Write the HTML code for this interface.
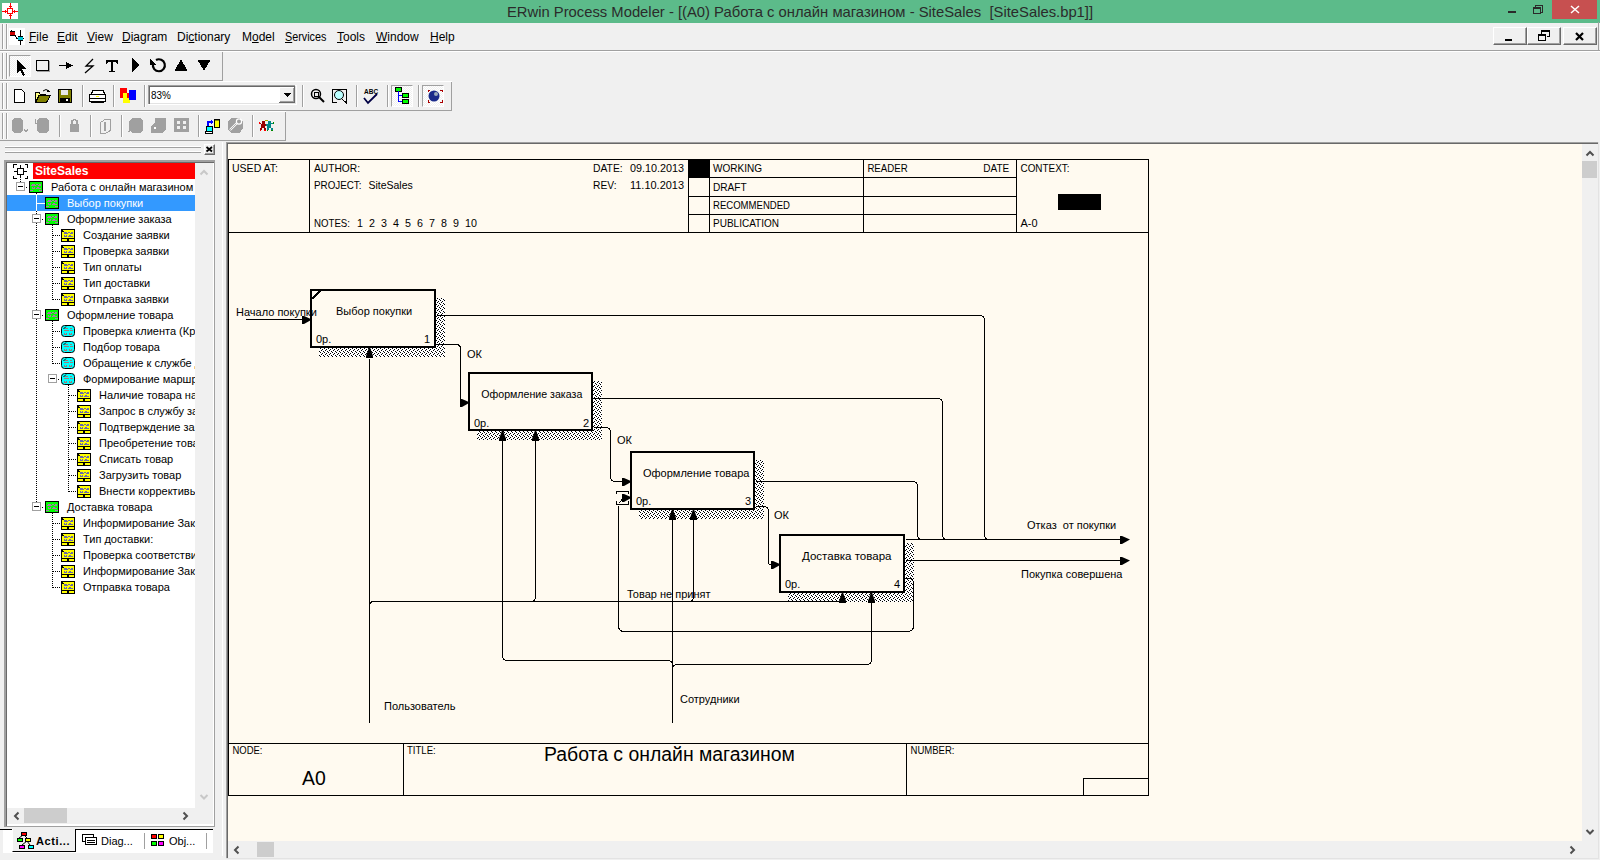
<!DOCTYPE html>
<html><head><meta charset="utf-8"><style>
*{box-sizing:border-box}
html,body{margin:0;padding:0}
body{width:1600px;height:860px;overflow:hidden;position:relative;background:#f0f0f0;font-family:"Liberation Sans",sans-serif;color:#000}
.a{position:absolute}
.mi{position:absolute;top:29px;font-size:12px;line-height:16px;white-space:nowrap}
.mi u{text-decoration:underline;text-underline-offset:1px;text-decoration-thickness:1px}
.tr{position:absolute;left:0;height:16px;width:189px;font-size:11px;line-height:16px;white-space:nowrap}
</style></head><body>
<div class="a" style="left:0px;top:0px;width:1600px;height:23px;background:#5cbb8a;"></div>
<div class="a" style="left:0;top:1px;width:1600px;text-align:center;font-size:14.8px;line-height:22px;color:#2b2b2b;white-space:nowrap">ERwin Process Modeler - [(A0) Работа с онлайн магазином - SiteSales&nbsp;&nbsp;[SiteSales.bp1]]</div>
<svg class="a" style="left:2px;top:3px" width="16" height="16" shape-rendering="crispEdges">
<rect x="0" y="0" width="16" height="16" fill="#fff"/>
<g fill="#f00"><rect x="5" y="5" width="6" height="1"/><rect x="5" y="10" width="6" height="1"/><rect x="5" y="5" width="1" height="6"/><rect x="10" y="5" width="1" height="6"/>
<rect x="8" y="0" width="1" height="5"/><rect x="8" y="11" width="1" height="5"/><rect x="0" y="8" width="5" height="1"/><rect x="11" y="8" width="5" height="1"/>
<rect x="7" y="3" width="3" height="1"/><rect x="7" y="12" width="3" height="1"/><rect x="3" y="7" width="1" height="3"/><rect x="12" y="7" width="1" height="3"/></g>
</svg>
<svg class="a" style="left:1490px;top:0" width="110" height="22" shape-rendering="crispEdges"><rect x="62" y="0" width="45" height="19" fill="#c75050"/><rect x="18" y="11" width="8" height="2" fill="#2a2a2a"/><path d="M43.5,7.5h7v6h-7z M43.5,8.5h7 M45.5,7.5v-2.5h7v7h-2" fill="none" stroke="#2a2a2a"/><path d="M81,6L89,13M89,6L81,13" stroke="#fff" stroke-width="1.5" shape-rendering="auto"/></svg>
<div class="a" style="left:0px;top:50px;width:1600px;height:1px;background:#a0a0a0"></div>
<div class="a" style="left:0px;top:51px;width:1600px;height:1px;background:#ffffff"></div>
<div class="a" style="left:2px;top:24px;width:1px;height:25px;background:#a0a0a0"></div>
<div class="a" style="left:3px;top:24px;width:1px;height:25px;background:#fff"></div>
<div class="a" style="left:6px;top:24px;width:1px;height:25px;background:#a0a0a0"></div>
<div class="a" style="left:7px;top:24px;width:1px;height:25px;background:#fff"></div>
<svg class="a" style="left:9px;top:28px" width="16" height="17" shape-rendering="crispEdges">
<rect x="0" y="0" width="16" height="17" fill="#fff"/>
<rect x="2" y="2" width="1" height="1" fill="#000"/>
<rect x="1" y="4" width="5" height="3" fill="#c00"/><rect x="1" y="3" width="5" height="1" fill="#000"/><rect x="1" y="7" width="5" height="1" fill="#000"/>
<rect x="6" y="7" width="1" height="2" fill="#000"/><rect x="7" y="9" width="1" height="2" fill="#000"/>
<rect x="11" y="2" width="1" height="15" fill="#000"/>
<rect x="9" y="9" width="5" height="3" fill="#00c8d8"/><rect x="8" y="10" width="1" height="1" fill="#000"/><rect x="14" y="10" width="1" height="1" fill="#000"/>
<rect x="9" y="8" width="5" height="1" fill="#000"/><rect x="9" y="12" width="5" height="1" fill="#000"/>
</svg>
<div class="mi" style="left:29px"><u>F</u>ile</div>
<div class="mi" style="left:57px"><u>E</u>dit</div>
<div class="mi" style="left:87px"><u>V</u>iew</div>
<div class="mi" style="left:122px"><u>D</u>iagram</div>
<div class="mi" style="left:177px">Di<u>c</u>tionary</div>
<div class="mi" style="left:242px">M<u>o</u>del</div>
<div class="mi" style="left:285px"><span style="display:inline-block;transform:scaleX(0.9);transform-origin:0 0"><u>S</u>ervices</span></div>
<div class="mi" style="left:337px"><u>T</u>ools</div>
<div class="mi" style="left:376px"><u>W</u>indow</div>
<div class="mi" style="left:430px"><u>H</u>elp</div>
<div class="a" style="left:1493px;top:27px;width:34px;height:18px;background:#f0f0f0;border-top:1px solid #fff;border-left:1px solid #fff;border-right:1px solid #696969;border-bottom:1px solid #696969;box-shadow:inset -1px -1px 0 #a0a0a0"></div>
<div class="a" style="left:1527px;top:27px;width:34px;height:18px;background:#f0f0f0;border-top:1px solid #fff;border-left:1px solid #fff;border-right:1px solid #696969;border-bottom:1px solid #696969;box-shadow:inset -1px -1px 0 #a0a0a0"></div>
<div class="a" style="left:1563px;top:27px;width:34px;height:18px;background:#f0f0f0;border-top:1px solid #fff;border-left:1px solid #fff;border-right:1px solid #696969;border-bottom:1px solid #696969;box-shadow:inset -1px -1px 0 #a0a0a0"></div>
<svg class="a" style="left:1493px;top:27px" width="104" height="18" shape-rendering="crispEdges"><rect x="12" y="12" width="7" height="2" fill="#000"/><path d="M45.5,7.5h7v6h-7z M45.5,8.5h7 M48.5,6.5v-3h8v6h-3 M48.5,4.5h8" fill="none" stroke="#000"/><path d="M83,6L90,13M90,6L83,13" stroke="#000" stroke-width="2.2" shape-rendering="auto"/></svg>
<div class="a" style="left:1598px;top:22px;width:1px;height:28px;background:#a0a0a0"></div>
<div class="a" style="left:0px;top:80px;width:223px;height:1px;background:#a0a0a0"></div>
<div class="a" style="left:0px;top:81px;width:452px;height:1px;background:#fff"></div>
<div class="a" style="left:0px;top:110px;width:452px;height:1px;background:#a0a0a0"></div>
<div class="a" style="left:0px;top:111px;width:286px;height:1px;background:#fff"></div>
<div class="a" style="left:0px;top:140px;width:286px;height:1px;background:#a0a0a0"></div>
<div class="a" style="left:222px;top:52px;width:1px;height:28px;background:#a0a0a0"></div>
<div class="a" style="left:451px;top:82px;width:1px;height:28px;background:#a0a0a0"></div>
<div class="a" style="left:285px;top:112px;width:1px;height:28px;background:#a0a0a0"></div>
<div class="a" style="left:2px;top:53px;width:1px;height:26px;background:#a0a0a0"></div><div class="a" style="left:3px;top:53px;width:1px;height:26px;background:#fff"></div><div class="a" style="left:6px;top:53px;width:1px;height:26px;background:#a0a0a0"></div><div class="a" style="left:7px;top:53px;width:1px;height:26px;background:#fff"></div>
<div class="a" style="left:2px;top:83px;width:1px;height:26px;background:#a0a0a0"></div><div class="a" style="left:3px;top:83px;width:1px;height:26px;background:#fff"></div><div class="a" style="left:6px;top:83px;width:1px;height:26px;background:#a0a0a0"></div><div class="a" style="left:7px;top:83px;width:1px;height:26px;background:#fff"></div>
<div class="a" style="left:2px;top:113px;width:1px;height:26px;background:#a0a0a0"></div><div class="a" style="left:3px;top:113px;width:1px;height:26px;background:#fff"></div><div class="a" style="left:6px;top:113px;width:1px;height:26px;background:#a0a0a0"></div><div class="a" style="left:7px;top:113px;width:1px;height:26px;background:#fff"></div>
<div class="a" style="left:9px;top:55px;width:22px;height:22px;background:repeating-conic-gradient(#fff 0 25%,#f0f0f0 0 50%) 0 0/2px 2px;border-top:1px solid #a0a0a0;border-left:1px solid #a0a0a0;border-right:1px solid #fff;border-bottom:1px solid #fff"></div>
<svg class="a" style="left:0;top:50px" width="230" height="30" shape-rendering="crispEdges">
<path d="M17,10L17,23L20,20L23,26L25,25L22,19L26,19Z" fill="#000"/>
<rect x="36.5" y="10.5" width="12" height="10" fill="none" stroke="#000"/>
<rect x="37" y="21" width="13" height="1" fill="#a0a0a0"/><rect x="49" y="11" width="1" height="11" fill="#a0a0a0"/>
<rect x="59" y="15" width="9" height="1" fill="#000"/><path d="M66,12L73,15.5L66,19Z" fill="#000"/>
<path d="M93,9L86,16H93L85,23" fill="none" stroke="#000" stroke-width="1.3" shape-rendering="auto"/>
<path d="M106,10H118V14H117L116,12H113V21H115V22H109V21H111V12H108L107,14H106Z" fill="#000"/>
<path d="M132,8L140,15L132,22Z" fill="#000"/>
<path d="M153,14A6,6 0 1 0 156,10" fill="none" stroke="#000" stroke-width="2.2" shape-rendering="auto"/>
<path d="M150,8L150,15L156,15Z" fill="#000"/>
<path d="M181,9L187.5,21H174.5Z" fill="#000"/>
<path d="M197.5,10H210.5L204,21Z" fill="#000"/>
</svg>
<div class="a" style="left:82px;top:85px;width:1px;height:22px;background:#a0a0a0"></div><div class="a" style="left:83px;top:85px;width:1px;height:22px;background:#fff"></div>
<div class="a" style="left:113px;top:85px;width:1px;height:22px;background:#a0a0a0"></div><div class="a" style="left:114px;top:85px;width:1px;height:22px;background:#fff"></div>
<div class="a" style="left:144px;top:85px;width:1px;height:22px;background:#a0a0a0"></div><div class="a" style="left:145px;top:85px;width:1px;height:22px;background:#fff"></div>
<div class="a" style="left:302px;top:85px;width:1px;height:22px;background:#a0a0a0"></div><div class="a" style="left:303px;top:85px;width:1px;height:22px;background:#fff"></div>
<div class="a" style="left:356px;top:85px;width:1px;height:22px;background:#a0a0a0"></div><div class="a" style="left:357px;top:85px;width:1px;height:22px;background:#fff"></div>
<div class="a" style="left:387px;top:85px;width:1px;height:22px;background:#a0a0a0"></div><div class="a" style="left:388px;top:85px;width:1px;height:22px;background:#fff"></div>
<div class="a" style="left:418px;top:85px;width:1px;height:22px;background:#a0a0a0"></div><div class="a" style="left:419px;top:85px;width:1px;height:22px;background:#fff"></div>
<div class="a" style="left:391px;top:85px;width:22px;height:22px;background:repeating-conic-gradient(#fff 0 25%,#f0f0f0 0 50%) 0 0/2px 2px;border-top:1px solid #a0a0a0;border-left:1px solid #a0a0a0;border-right:1px solid #fff;border-bottom:1px solid #fff"></div>
<div class="a" style="left:422px;top:85px;width:22px;height:22px;background:repeating-conic-gradient(#fff 0 25%,#f0f0f0 0 50%) 0 0/2px 2px;border-top:1px solid #a0a0a0;border-left:1px solid #a0a0a0;border-right:1px solid #fff;border-bottom:1px solid #fff"></div>
<svg class="a" style="left:0;top:82px" width="460" height="28" shape-rendering="crispEdges">
<path d="M14.5,7.5H21.5L24.5,10.5V20.5H14.5Z" fill="#fff" stroke="#000"/>
<path d="M35.5,10.5H39L40,12H45V13H39L36,19Z" fill="#ffff80" stroke="#000"/>
<path d="M35.5,20.5L39,13.5H50.5L46.5,20.5Z" fill="#808000" stroke="#000"/>
<path d="M43,9Q46,6 49,9" fill="none" stroke="#000" shape-rendering="auto"/><path d="M48,7L50,10L47,10Z" fill="#000"/>
<rect x="58" y="7" width="14" height="14" fill="#000"/><rect x="59" y="8" width="12" height="12" fill="#808000"/>
<rect x="61" y="8" width="7" height="5" fill="#e8e8e8"/><rect x="60" y="16" width="10" height="4" fill="#000"/><rect x="66" y="17" width="2" height="2" fill="#fff"/>
<path d="M92.5,8.5H103.5L104.5,12.5H91.5Z" fill="#fff" stroke="#000"/>
<path d="M89.5,12.5H105.5V19.5H89.5Z" fill="#fff" stroke="#000"/>
<rect x="90" y="16" width="15" height="1" fill="#000"/><rect x="96" y="14" width="3" height="1" fill="#ff0"/>
<rect x="91" y="20" width="13" height="1" fill="#000"/>
<rect x="120" y="6" width="7" height="10" fill="#f00"/><rect x="123" y="11" width="7" height="10" fill="#ff0"/><rect x="129" y="8" width="7" height="10" fill="#00f"/>
<rect x="127" y="11" width="2" height="5" fill="#f00"/>
<rect x="148" y="3" width="149" height="20" fill="#fff"/><rect x="149" y="21" width="147" height="1" fill="#e3e3e3"/><rect x="295" y="4" width="1" height="18" fill="#e3e3e3"/>
<rect x="148" y="3" width="147" height="1" fill="#a0a0a0"/><rect x="148" y="3" width="1" height="19" fill="#a0a0a0"/>
<rect x="149" y="4" width="146" height="1" fill="#696969"/><rect x="149" y="4" width="1" height="18" fill="#696969"/>
<rect x="279" y="5" width="16" height="16" fill="#f0f0f0"/>
<rect x="279" y="5" width="16" height="1" fill="#fff"/><rect x="279" y="5" width="1" height="16" fill="#fff"/>
<rect x="279" y="20" width="16" height="1" fill="#696969"/><rect x="294" y="5" width="1" height="16" fill="#696969"/>
<rect x="280" y="19" width="14" height="1" fill="#a0a0a0"/><rect x="293" y="6" width="1" height="14" fill="#a0a0a0"/>
<path d="M283,11H291L287,15Z" fill="#000"/>
<circle cx="316" cy="12" r="4.5" fill="none" stroke="#000" stroke-width="1.5" shape-rendering="auto"/>
<path d="M319,15L324,20" stroke="#000" stroke-width="2" shape-rendering="auto"/>
<rect x="314" y="10" width="4" height="4" fill="none" stroke="#000"/>
<path d="M332.5,7.5H346.5V21L341,16" fill="none" stroke="#000"/>
<rect x="332" y="7" width="1" height="14" fill="#000"/><rect x="332" y="20" width="5" height="1" fill="#000"/>
<circle cx="339" cy="13" r="4.5" fill="#bff" stroke="#000" shape-rendering="auto"/>
<text x="364" y="12" font-size="6.5" font-weight="bold" fill="#000" font-family="Liberation Sans">ABC</text>
<path d="M364,16L368,21L377,12" fill="none" stroke="#004" stroke-width="1.8" shape-rendering="auto"/>
<rect x="395" y="5" width="6" height="4" fill="#0f0" stroke="#000"/><rect x="402" y="11" width="6" height="4" fill="#0f0" stroke="#000"/><rect x="402" y="17" width="6" height="4" fill="#0f0" stroke="#000"/>
<path d="M398.5,9V19.5H402 M398.5,13.5H402" fill="none" stroke="#00f"/>
<circle cx="434" cy="14" r="5.5" fill="#1a2a8a" shape-rendering="auto"/><circle cx="436" cy="12" r="2" fill="#9ab" shape-rendering="auto"/>
<path d="M428,8V10M428,8H430 M440,8H442V10 M428,18V20H430 M442,18V20H440" fill="none" stroke="#a00"/>
</svg>
<div class="a" style="left:59px;top:115px;width:1px;height:22px;background:#a0a0a0"></div><div class="a" style="left:60px;top:115px;width:1px;height:22px;background:#fff"></div>
<div class="a" style="left:90px;top:115px;width:1px;height:22px;background:#a0a0a0"></div><div class="a" style="left:91px;top:115px;width:1px;height:22px;background:#fff"></div>
<div class="a" style="left:121px;top:115px;width:1px;height:22px;background:#a0a0a0"></div><div class="a" style="left:122px;top:115px;width:1px;height:22px;background:#fff"></div>
<div class="a" style="left:198px;top:115px;width:1px;height:22px;background:#a0a0a0"></div><div class="a" style="left:199px;top:115px;width:1px;height:22px;background:#fff"></div>
<div class="a" style="left:252px;top:115px;width:1px;height:22px;background:#a0a0a0"></div><div class="a" style="left:253px;top:115px;width:1px;height:22px;background:#fff"></div>
<svg class="a" style="left:0;top:112px" width="290" height="28" shape-rendering="crispEdges">
<g fill="#a0a0a0">
<path d="M14,6H21L23,9V18L21,21H14L12,18V9Z"/><path d="M24,17L26,20L28,17" fill="none" stroke="#a0a0a0"/>
<path d="M39,6H46L49,9V18L46,21H39L37,18V9Z"/><path d="M35,7V11L37,12" fill="none" stroke="#a0a0a0"/>
<path d="M70,12H79V20H70Z"/><path d="M72,12V9Q74.5,6 77,9V12" fill="none" stroke="#a0a0a0" stroke-width="1.5"/>
<path d="M100.5,10.5L105,7.5H110.5V18.5L105,21.5H100.5Z" fill="none" stroke="#a0a0a0"/><rect x="104" y="10" width="2" height="9"/>
<path d="M132,6H140L143,9V18L140,21H132L129,18V9Z"/><path d="M128,20L131,18" stroke="#a0a0a0"/>
<path d="M155,6H166V18L162,21H151V14L155,10Z"/><rect x="154" y="15" width="2" height="2" fill="#fff"/>
<rect x="174" y="6" width="15" height="14"/><rect x="177" y="9" width="3" height="3" fill="#f0f0f0"/><rect x="183" y="9" width="3" height="3" fill="#f0f0f0"/><rect x="177" y="14" width="3" height="3" fill="#f0f0f0"/><rect x="183" y="14" width="3" height="3" fill="#f0f0f0"/>
<path d="M231,6H239L243,9V16L241,18V20L238,21H231L228,18V9Z"/><path d="M230,18L237,11" stroke="#fff" stroke-width="2.2" fill="none" shape-rendering="auto"/><path d="M230,18L237,11" stroke="#a0a0a0" stroke-width="0.8" fill="none" shape-rendering="auto"/><circle cx="239" cy="9.5" r="2.6" fill="none" stroke="#fff" stroke-width="1.2" shape-rendering="auto"/>
</g>
<rect x="206" y="14" width="6" height="5" fill="#0ff" stroke="#000"/><rect x="205.5" y="19.5" width="7" height="2" fill="#fff" stroke="#000"/>
<path d="M208,14V10H212" fill="none" stroke="#00f" stroke-width="2"/><path d="M211,8L214,10L211,12Z" fill="#00f"/>
<rect x="214.5" y="7.5" width="5" height="8" rx="1" fill="#ff0" stroke="#000" stroke-width="1.2"/><rect x="215" y="8" width="4" height="1" fill="#880"/>
<g fill="#900"><rect x="262" y="9" width="3" height="3"/><rect x="261" y="12" width="4" height="4"/><rect x="259" y="11" width="2" height="1"/><rect x="265" y="12" width="1" height="2"/><rect x="260" y="16" width="2" height="2"/><rect x="264" y="16" width="2" height="2"/></g>
<g fill="#f00"><rect x="259" y="10" width="1" height="2"/><rect x="260" y="18" width="1" height="1"/><rect x="264" y="18" width="2" height="1"/></g>
<g fill="#088"><rect x="268" y="9" width="3" height="3"/><rect x="267" y="12" width="4" height="4"/><rect x="271" y="11" width="2" height="1"/><rect x="266" y="12" width="1" height="2"/><rect x="267" y="16" width="2" height="2"/><rect x="271" y="16" width="2" height="2"/></g>
<g fill="#080"><rect x="273" y="10" width="1" height="2"/><rect x="267" y="18" width="1" height="1"/><rect x="271" y="18" width="2" height="1"/></g>
<rect x="265" y="8" width="3" height="1" fill="#aa0"/>
</svg>
<div class="a" style="left:151px;top:87px;font-size:11px;line-height:16px;color:#000;transform:scaleX(0.9);transform-origin:0 0">83%</div>
<div class="a" style="left:5px;top:146px;width:196px;height:1px;background:#fff"></div>
<div class="a" style="left:5px;top:147px;width:196px;height:1px;background:#a0a0a0"></div>
<div class="a" style="left:5px;top:151px;width:196px;height:1px;background:#fff"></div>
<div class="a" style="left:5px;top:152px;width:196px;height:1px;background:#a0a0a0"></div>
<div class="a" style="left:204px;top:144px;width:11px;height:11px;background:#f0f0f0;border-top:1px solid #fff;border-left:1px solid #fff;border-right:1px solid #696969;border-bottom:1px solid #696969;box-shadow:inset -1px -1px 0 #a0a0a0"></div>
<svg class="a" style="left:204px;top:144px" width="11" height="11"><path d="M2.5,3L8,7.5M8,3L2.5,7.5" stroke="#000" stroke-width="1.8"/></svg>
<div class="a" style="left:4px;top:160px;width:211px;height:667px;background:#fff;border-top:2px solid #a0a0a0;border-left:2px solid #a0a0a0;border-right:1px solid #a0a0a0;border-bottom:1px solid #a0a0a0;box-shadow:inset 1px 1px 0 #696969"></div>
<div class="a" style="left:195px;top:163px;width:18px;height:645px;background:#f0f0f0;"></div>
<div class="a" style="left:213px;top:163px;width:1px;height:645px;background:#fff"></div>
<svg class="a" style="left:195px;top:163px" width="18" height="645"><path d="M5.5,11.5L9,8L12.5,11.5" fill="none" stroke="#c8c8c8" stroke-width="2"/><path d="M5.5,632L9,635.5L12.5,632" fill="none" stroke="#c8c8c8" stroke-width="2"/></svg>
<div class="a" style="left:7px;top:808px;width:206px;height:16px;background:#f0f0f0;"></div>
<div class="a" style="left:24px;top:808px;width:43px;height:15px;background:#cdcdcd;"></div>
<svg class="a" style="left:7px;top:808px" width="206" height="16"><path d="M11.5,4.5L8,8L11.5,11.5" fill="none" stroke="#505050" stroke-width="2"/><path d="M176.5,4.5L180,8L176.5,11.5" fill="none" stroke="#505050" stroke-width="2"/></svg>
<div class="a" style="left:195px;top:808px;width:18px;height:16px;background:#f0f0f0;"></div>
<div class="a" style="left:222px;top:142px;width:1px;height:714px;background:#fff"></div>
<div class="a" style="left:7px;top:163px;width:188px;height:645px;overflow:hidden"><div class="a" style="left:0;top:32px;width:189px;height:16px;background:#3399ff"></div><svg class="a" style="left:0;top:0" width="189" height="645" shape-rendering="crispEdges"><rect x="13" y="16" width="1" height="1" fill="#000"/><rect x="13" y="18" width="1" height="1" fill="#000"/><rect x="13" y="20" width="1" height="1" fill="#000"/><rect x="13" y="22" width="1" height="1" fill="#000"/><rect x="13" y="24" width="1" height="1" fill="#000"/><rect x="29" y="30" width="1" height="1" fill="#000"/><rect x="29" y="32" width="1" height="1" fill="#000"/><rect x="29" y="34" width="1" height="1" fill="#000"/><rect x="29" y="36" width="1" height="1" fill="#000"/><rect x="29" y="38" width="1" height="1" fill="#000"/><rect x="29" y="40" width="1" height="1" fill="#000"/><rect x="29" y="42" width="1" height="1" fill="#000"/><rect x="29" y="44" width="1" height="1" fill="#000"/><rect x="29" y="46" width="1" height="1" fill="#000"/><rect x="29" y="48" width="1" height="1" fill="#000"/><rect x="29" y="50" width="1" height="1" fill="#000"/><rect x="29" y="52" width="1" height="1" fill="#000"/><rect x="29" y="54" width="1" height="1" fill="#000"/><rect x="29" y="56" width="1" height="1" fill="#000"/><rect x="29" y="58" width="1" height="1" fill="#000"/><rect x="29" y="60" width="1" height="1" fill="#000"/><rect x="29" y="62" width="1" height="1" fill="#000"/><rect x="29" y="64" width="1" height="1" fill="#000"/><rect x="29" y="66" width="1" height="1" fill="#000"/><rect x="29" y="68" width="1" height="1" fill="#000"/><rect x="29" y="70" width="1" height="1" fill="#000"/><rect x="29" y="72" width="1" height="1" fill="#000"/><rect x="29" y="74" width="1" height="1" fill="#000"/><rect x="29" y="76" width="1" height="1" fill="#000"/><rect x="29" y="78" width="1" height="1" fill="#000"/><rect x="29" y="80" width="1" height="1" fill="#000"/><rect x="29" y="82" width="1" height="1" fill="#000"/><rect x="29" y="84" width="1" height="1" fill="#000"/><rect x="29" y="86" width="1" height="1" fill="#000"/><rect x="29" y="88" width="1" height="1" fill="#000"/><rect x="29" y="90" width="1" height="1" fill="#000"/><rect x="29" y="92" width="1" height="1" fill="#000"/><rect x="29" y="94" width="1" height="1" fill="#000"/><rect x="29" y="96" width="1" height="1" fill="#000"/><rect x="29" y="98" width="1" height="1" fill="#000"/><rect x="29" y="100" width="1" height="1" fill="#000"/><rect x="29" y="102" width="1" height="1" fill="#000"/><rect x="29" y="104" width="1" height="1" fill="#000"/><rect x="29" y="106" width="1" height="1" fill="#000"/><rect x="29" y="108" width="1" height="1" fill="#000"/><rect x="29" y="110" width="1" height="1" fill="#000"/><rect x="29" y="112" width="1" height="1" fill="#000"/><rect x="29" y="114" width="1" height="1" fill="#000"/><rect x="29" y="116" width="1" height="1" fill="#000"/><rect x="29" y="118" width="1" height="1" fill="#000"/><rect x="29" y="120" width="1" height="1" fill="#000"/><rect x="29" y="122" width="1" height="1" fill="#000"/><rect x="29" y="124" width="1" height="1" fill="#000"/><rect x="29" y="126" width="1" height="1" fill="#000"/><rect x="29" y="128" width="1" height="1" fill="#000"/><rect x="29" y="130" width="1" height="1" fill="#000"/><rect x="29" y="132" width="1" height="1" fill="#000"/><rect x="29" y="134" width="1" height="1" fill="#000"/><rect x="29" y="136" width="1" height="1" fill="#000"/><rect x="29" y="138" width="1" height="1" fill="#000"/><rect x="29" y="140" width="1" height="1" fill="#000"/><rect x="29" y="142" width="1" height="1" fill="#000"/><rect x="29" y="144" width="1" height="1" fill="#000"/><rect x="29" y="146" width="1" height="1" fill="#000"/><rect x="29" y="148" width="1" height="1" fill="#000"/><rect x="29" y="150" width="1" height="1" fill="#000"/><rect x="29" y="152" width="1" height="1" fill="#000"/><rect x="29" y="154" width="1" height="1" fill="#000"/><rect x="29" y="156" width="1" height="1" fill="#000"/><rect x="29" y="158" width="1" height="1" fill="#000"/><rect x="29" y="160" width="1" height="1" fill="#000"/><rect x="29" y="162" width="1" height="1" fill="#000"/><rect x="29" y="164" width="1" height="1" fill="#000"/><rect x="29" y="166" width="1" height="1" fill="#000"/><rect x="29" y="168" width="1" height="1" fill="#000"/><rect x="29" y="170" width="1" height="1" fill="#000"/><rect x="29" y="172" width="1" height="1" fill="#000"/><rect x="29" y="174" width="1" height="1" fill="#000"/><rect x="29" y="176" width="1" height="1" fill="#000"/><rect x="29" y="178" width="1" height="1" fill="#000"/><rect x="29" y="180" width="1" height="1" fill="#000"/><rect x="29" y="182" width="1" height="1" fill="#000"/><rect x="29" y="184" width="1" height="1" fill="#000"/><rect x="29" y="186" width="1" height="1" fill="#000"/><rect x="29" y="188" width="1" height="1" fill="#000"/><rect x="29" y="190" width="1" height="1" fill="#000"/><rect x="29" y="192" width="1" height="1" fill="#000"/><rect x="29" y="194" width="1" height="1" fill="#000"/><rect x="29" y="196" width="1" height="1" fill="#000"/><rect x="29" y="198" width="1" height="1" fill="#000"/><rect x="29" y="200" width="1" height="1" fill="#000"/><rect x="29" y="202" width="1" height="1" fill="#000"/><rect x="29" y="204" width="1" height="1" fill="#000"/><rect x="29" y="206" width="1" height="1" fill="#000"/><rect x="29" y="208" width="1" height="1" fill="#000"/><rect x="29" y="210" width="1" height="1" fill="#000"/><rect x="29" y="212" width="1" height="1" fill="#000"/><rect x="29" y="214" width="1" height="1" fill="#000"/><rect x="29" y="216" width="1" height="1" fill="#000"/><rect x="29" y="218" width="1" height="1" fill="#000"/><rect x="29" y="220" width="1" height="1" fill="#000"/><rect x="29" y="222" width="1" height="1" fill="#000"/><rect x="29" y="224" width="1" height="1" fill="#000"/><rect x="29" y="226" width="1" height="1" fill="#000"/><rect x="29" y="228" width="1" height="1" fill="#000"/><rect x="29" y="230" width="1" height="1" fill="#000"/><rect x="29" y="232" width="1" height="1" fill="#000"/><rect x="29" y="234" width="1" height="1" fill="#000"/><rect x="29" y="236" width="1" height="1" fill="#000"/><rect x="29" y="238" width="1" height="1" fill="#000"/><rect x="29" y="240" width="1" height="1" fill="#000"/><rect x="29" y="242" width="1" height="1" fill="#000"/><rect x="29" y="244" width="1" height="1" fill="#000"/><rect x="29" y="246" width="1" height="1" fill="#000"/><rect x="29" y="248" width="1" height="1" fill="#000"/><rect x="29" y="250" width="1" height="1" fill="#000"/><rect x="29" y="252" width="1" height="1" fill="#000"/><rect x="29" y="254" width="1" height="1" fill="#000"/><rect x="29" y="256" width="1" height="1" fill="#000"/><rect x="29" y="258" width="1" height="1" fill="#000"/><rect x="29" y="260" width="1" height="1" fill="#000"/><rect x="29" y="262" width="1" height="1" fill="#000"/><rect x="29" y="264" width="1" height="1" fill="#000"/><rect x="29" y="266" width="1" height="1" fill="#000"/><rect x="29" y="268" width="1" height="1" fill="#000"/><rect x="29" y="270" width="1" height="1" fill="#000"/><rect x="29" y="272" width="1" height="1" fill="#000"/><rect x="29" y="274" width="1" height="1" fill="#000"/><rect x="29" y="276" width="1" height="1" fill="#000"/><rect x="29" y="278" width="1" height="1" fill="#000"/><rect x="29" y="280" width="1" height="1" fill="#000"/><rect x="29" y="282" width="1" height="1" fill="#000"/><rect x="29" y="284" width="1" height="1" fill="#000"/><rect x="29" y="286" width="1" height="1" fill="#000"/><rect x="29" y="288" width="1" height="1" fill="#000"/><rect x="29" y="290" width="1" height="1" fill="#000"/><rect x="29" y="292" width="1" height="1" fill="#000"/><rect x="29" y="294" width="1" height="1" fill="#000"/><rect x="29" y="296" width="1" height="1" fill="#000"/><rect x="29" y="298" width="1" height="1" fill="#000"/><rect x="29" y="300" width="1" height="1" fill="#000"/><rect x="29" y="302" width="1" height="1" fill="#000"/><rect x="29" y="304" width="1" height="1" fill="#000"/><rect x="29" y="306" width="1" height="1" fill="#000"/><rect x="29" y="308" width="1" height="1" fill="#000"/><rect x="29" y="310" width="1" height="1" fill="#000"/><rect x="29" y="312" width="1" height="1" fill="#000"/><rect x="29" y="314" width="1" height="1" fill="#000"/><rect x="29" y="316" width="1" height="1" fill="#000"/><rect x="29" y="318" width="1" height="1" fill="#000"/><rect x="29" y="320" width="1" height="1" fill="#000"/><rect x="29" y="322" width="1" height="1" fill="#000"/><rect x="29" y="324" width="1" height="1" fill="#000"/><rect x="29" y="326" width="1" height="1" fill="#000"/><rect x="29" y="328" width="1" height="1" fill="#000"/><rect x="29" y="330" width="1" height="1" fill="#000"/><rect x="29" y="332" width="1" height="1" fill="#000"/><rect x="29" y="334" width="1" height="1" fill="#000"/><rect x="29" y="336" width="1" height="1" fill="#000"/><rect x="29" y="338" width="1" height="1" fill="#000"/><rect x="29" y="340" width="1" height="1" fill="#000"/><rect x="29" y="342" width="1" height="1" fill="#000"/><rect x="29" y="344" width="1" height="1" fill="#000"/><rect x="45" y="62" width="1" height="1" fill="#000"/><rect x="45" y="64" width="1" height="1" fill="#000"/><rect x="45" y="66" width="1" height="1" fill="#000"/><rect x="45" y="68" width="1" height="1" fill="#000"/><rect x="45" y="70" width="1" height="1" fill="#000"/><rect x="45" y="72" width="1" height="1" fill="#000"/><rect x="45" y="74" width="1" height="1" fill="#000"/><rect x="45" y="76" width="1" height="1" fill="#000"/><rect x="45" y="78" width="1" height="1" fill="#000"/><rect x="45" y="80" width="1" height="1" fill="#000"/><rect x="45" y="82" width="1" height="1" fill="#000"/><rect x="45" y="84" width="1" height="1" fill="#000"/><rect x="45" y="86" width="1" height="1" fill="#000"/><rect x="45" y="88" width="1" height="1" fill="#000"/><rect x="45" y="90" width="1" height="1" fill="#000"/><rect x="45" y="92" width="1" height="1" fill="#000"/><rect x="45" y="94" width="1" height="1" fill="#000"/><rect x="45" y="96" width="1" height="1" fill="#000"/><rect x="45" y="98" width="1" height="1" fill="#000"/><rect x="45" y="100" width="1" height="1" fill="#000"/><rect x="45" y="102" width="1" height="1" fill="#000"/><rect x="45" y="104" width="1" height="1" fill="#000"/><rect x="45" y="106" width="1" height="1" fill="#000"/><rect x="45" y="108" width="1" height="1" fill="#000"/><rect x="45" y="110" width="1" height="1" fill="#000"/><rect x="45" y="112" width="1" height="1" fill="#000"/><rect x="45" y="114" width="1" height="1" fill="#000"/><rect x="45" y="116" width="1" height="1" fill="#000"/><rect x="45" y="118" width="1" height="1" fill="#000"/><rect x="45" y="120" width="1" height="1" fill="#000"/><rect x="45" y="122" width="1" height="1" fill="#000"/><rect x="45" y="124" width="1" height="1" fill="#000"/><rect x="45" y="126" width="1" height="1" fill="#000"/><rect x="45" y="128" width="1" height="1" fill="#000"/><rect x="45" y="130" width="1" height="1" fill="#000"/><rect x="45" y="132" width="1" height="1" fill="#000"/><rect x="45" y="134" width="1" height="1" fill="#000"/><rect x="45" y="136" width="1" height="1" fill="#000"/><rect x="45" y="158" width="1" height="1" fill="#000"/><rect x="45" y="160" width="1" height="1" fill="#000"/><rect x="45" y="162" width="1" height="1" fill="#000"/><rect x="45" y="164" width="1" height="1" fill="#000"/><rect x="45" y="166" width="1" height="1" fill="#000"/><rect x="45" y="168" width="1" height="1" fill="#000"/><rect x="45" y="170" width="1" height="1" fill="#000"/><rect x="45" y="172" width="1" height="1" fill="#000"/><rect x="45" y="174" width="1" height="1" fill="#000"/><rect x="45" y="176" width="1" height="1" fill="#000"/><rect x="45" y="178" width="1" height="1" fill="#000"/><rect x="45" y="180" width="1" height="1" fill="#000"/><rect x="45" y="182" width="1" height="1" fill="#000"/><rect x="45" y="184" width="1" height="1" fill="#000"/><rect x="45" y="186" width="1" height="1" fill="#000"/><rect x="45" y="188" width="1" height="1" fill="#000"/><rect x="45" y="190" width="1" height="1" fill="#000"/><rect x="45" y="192" width="1" height="1" fill="#000"/><rect x="45" y="194" width="1" height="1" fill="#000"/><rect x="45" y="196" width="1" height="1" fill="#000"/><rect x="45" y="198" width="1" height="1" fill="#000"/><rect x="45" y="200" width="1" height="1" fill="#000"/><rect x="45" y="350" width="1" height="1" fill="#000"/><rect x="45" y="352" width="1" height="1" fill="#000"/><rect x="45" y="354" width="1" height="1" fill="#000"/><rect x="45" y="356" width="1" height="1" fill="#000"/><rect x="45" y="358" width="1" height="1" fill="#000"/><rect x="45" y="360" width="1" height="1" fill="#000"/><rect x="45" y="362" width="1" height="1" fill="#000"/><rect x="45" y="364" width="1" height="1" fill="#000"/><rect x="45" y="366" width="1" height="1" fill="#000"/><rect x="45" y="368" width="1" height="1" fill="#000"/><rect x="45" y="370" width="1" height="1" fill="#000"/><rect x="45" y="372" width="1" height="1" fill="#000"/><rect x="45" y="374" width="1" height="1" fill="#000"/><rect x="45" y="376" width="1" height="1" fill="#000"/><rect x="45" y="378" width="1" height="1" fill="#000"/><rect x="45" y="380" width="1" height="1" fill="#000"/><rect x="45" y="382" width="1" height="1" fill="#000"/><rect x="45" y="384" width="1" height="1" fill="#000"/><rect x="45" y="386" width="1" height="1" fill="#000"/><rect x="45" y="388" width="1" height="1" fill="#000"/><rect x="45" y="390" width="1" height="1" fill="#000"/><rect x="45" y="392" width="1" height="1" fill="#000"/><rect x="45" y="394" width="1" height="1" fill="#000"/><rect x="45" y="396" width="1" height="1" fill="#000"/><rect x="45" y="398" width="1" height="1" fill="#000"/><rect x="45" y="400" width="1" height="1" fill="#000"/><rect x="45" y="402" width="1" height="1" fill="#000"/><rect x="45" y="404" width="1" height="1" fill="#000"/><rect x="45" y="406" width="1" height="1" fill="#000"/><rect x="45" y="408" width="1" height="1" fill="#000"/><rect x="45" y="410" width="1" height="1" fill="#000"/><rect x="45" y="412" width="1" height="1" fill="#000"/><rect x="45" y="414" width="1" height="1" fill="#000"/><rect x="45" y="416" width="1" height="1" fill="#000"/><rect x="45" y="418" width="1" height="1" fill="#000"/><rect x="45" y="420" width="1" height="1" fill="#000"/><rect x="45" y="422" width="1" height="1" fill="#000"/><rect x="45" y="424" width="1" height="1" fill="#000"/><rect x="61" y="222" width="1" height="1" fill="#000"/><rect x="61" y="224" width="1" height="1" fill="#000"/><rect x="61" y="226" width="1" height="1" fill="#000"/><rect x="61" y="228" width="1" height="1" fill="#000"/><rect x="61" y="230" width="1" height="1" fill="#000"/><rect x="61" y="232" width="1" height="1" fill="#000"/><rect x="61" y="234" width="1" height="1" fill="#000"/><rect x="61" y="236" width="1" height="1" fill="#000"/><rect x="61" y="238" width="1" height="1" fill="#000"/><rect x="61" y="240" width="1" height="1" fill="#000"/><rect x="61" y="242" width="1" height="1" fill="#000"/><rect x="61" y="244" width="1" height="1" fill="#000"/><rect x="61" y="246" width="1" height="1" fill="#000"/><rect x="61" y="248" width="1" height="1" fill="#000"/><rect x="61" y="250" width="1" height="1" fill="#000"/><rect x="61" y="252" width="1" height="1" fill="#000"/><rect x="61" y="254" width="1" height="1" fill="#000"/><rect x="61" y="256" width="1" height="1" fill="#000"/><rect x="61" y="258" width="1" height="1" fill="#000"/><rect x="61" y="260" width="1" height="1" fill="#000"/><rect x="61" y="262" width="1" height="1" fill="#000"/><rect x="61" y="264" width="1" height="1" fill="#000"/><rect x="61" y="266" width="1" height="1" fill="#000"/><rect x="61" y="268" width="1" height="1" fill="#000"/><rect x="61" y="270" width="1" height="1" fill="#000"/><rect x="61" y="272" width="1" height="1" fill="#000"/><rect x="61" y="274" width="1" height="1" fill="#000"/><rect x="61" y="276" width="1" height="1" fill="#000"/><rect x="61" y="278" width="1" height="1" fill="#000"/><rect x="61" y="280" width="1" height="1" fill="#000"/><rect x="61" y="282" width="1" height="1" fill="#000"/><rect x="61" y="284" width="1" height="1" fill="#000"/><rect x="61" y="286" width="1" height="1" fill="#000"/><rect x="61" y="288" width="1" height="1" fill="#000"/><rect x="61" y="290" width="1" height="1" fill="#000"/><rect x="61" y="292" width="1" height="1" fill="#000"/><rect x="61" y="294" width="1" height="1" fill="#000"/><rect x="61" y="296" width="1" height="1" fill="#000"/><rect x="61" y="298" width="1" height="1" fill="#000"/><rect x="61" y="300" width="1" height="1" fill="#000"/><rect x="61" y="302" width="1" height="1" fill="#000"/><rect x="61" y="304" width="1" height="1" fill="#000"/><rect x="61" y="306" width="1" height="1" fill="#000"/><rect x="61" y="308" width="1" height="1" fill="#000"/><rect x="61" y="310" width="1" height="1" fill="#000"/><rect x="61" y="312" width="1" height="1" fill="#000"/><rect x="61" y="314" width="1" height="1" fill="#000"/><rect x="61" y="316" width="1" height="1" fill="#000"/><rect x="61" y="318" width="1" height="1" fill="#000"/><rect x="61" y="320" width="1" height="1" fill="#000"/><rect x="61" y="322" width="1" height="1" fill="#000"/><rect x="61" y="324" width="1" height="1" fill="#000"/><rect x="61" y="326" width="1" height="1" fill="#000"/><rect x="61" y="328" width="1" height="1" fill="#000"/><rect x="26" y="0" width="162" height="16" fill="#ff0000"/><g transform="translate(6,1)" fill="none" stroke="#000"><path d="M0.5,3.5V0.5H3.5 M11.5,0.5H14.5V3.5 M0.5,11.5V14.5H3.5 M11.5,14.5H14.5V11.5"/><rect x="4.5" y="4.5" width="6" height="6"/><path d="M7.5,1V4 M7.5,11V14 M1,7.5H4 M11,7.5H14"/></g><rect x="9" y="19" width="9" height="9" fill="#fff"/><rect x="9" y="19" width="9" height="1" fill="#a0a0a0"/><rect x="9" y="27" width="9" height="1" fill="#a0a0a0"/><rect x="9" y="19" width="1" height="9" fill="#a0a0a0"/><rect x="17" y="19" width="1" height="9" fill="#a0a0a0"/><rect x="11" y="23" width="5" height="1" fill="#000"/><rect x="19" y="24" width="1" height="1" fill="#000"/><rect x="22" y="18" width="14" height="12" fill="#000"/><rect x="23" y="19" width="12" height="10" fill="#00ff00"/><g fill="#a878a8"><rect x="25" y="21" width="3" height="1"/><rect x="29" y="21" width="2" height="1"/><rect x="32" y="21" width="2" height="1"/><rect x="24" y="22" width="5" height="1"/><rect x="31" y="22" width="3" height="1"/><rect x="25" y="24" width="1" height="1"/><rect x="27" y="24" width="1" height="1"/><rect x="30" y="24" width="2" height="1"/><rect x="25" y="25" width="3" height="1"/><rect x="29" y="25" width="5" height="1"/><rect x="23" y="27" width="3" height="1"/><rect x="32" y="27" width="3" height="1"/></g><rect x="29" y="32" width="1" height="16" fill="#fff"/><rect x="29" y="40" width="9" height="1" fill="#fff"/><rect x="38" y="34" width="14" height="12" fill="#000"/><rect x="39" y="35" width="12" height="10" fill="#00ff00"/><g fill="#a878a8"><rect x="41" y="37" width="3" height="1"/><rect x="45" y="37" width="2" height="1"/><rect x="48" y="37" width="2" height="1"/><rect x="40" y="38" width="5" height="1"/><rect x="47" y="38" width="3" height="1"/><rect x="41" y="40" width="1" height="1"/><rect x="43" y="40" width="1" height="1"/><rect x="46" y="40" width="2" height="1"/><rect x="41" y="41" width="3" height="1"/><rect x="45" y="41" width="5" height="1"/><rect x="39" y="43" width="3" height="1"/><rect x="48" y="43" width="3" height="1"/></g><rect x="25" y="51" width="9" height="9" fill="#fff"/><rect x="25" y="51" width="9" height="1" fill="#a0a0a0"/><rect x="25" y="59" width="9" height="1" fill="#a0a0a0"/><rect x="25" y="51" width="1" height="9" fill="#a0a0a0"/><rect x="33" y="51" width="1" height="9" fill="#a0a0a0"/><rect x="27" y="55" width="5" height="1" fill="#000"/><rect x="35" y="56" width="1" height="1" fill="#000"/><rect x="38" y="50" width="14" height="12" fill="#000"/><rect x="39" y="51" width="12" height="10" fill="#00ff00"/><g fill="#a878a8"><rect x="41" y="53" width="3" height="1"/><rect x="45" y="53" width="2" height="1"/><rect x="48" y="53" width="2" height="1"/><rect x="40" y="54" width="5" height="1"/><rect x="47" y="54" width="3" height="1"/><rect x="41" y="56" width="1" height="1"/><rect x="43" y="56" width="1" height="1"/><rect x="46" y="56" width="2" height="1"/><rect x="41" y="57" width="3" height="1"/><rect x="45" y="57" width="5" height="1"/><rect x="39" y="59" width="3" height="1"/><rect x="48" y="59" width="3" height="1"/></g><rect x="46" y="72" width="1" height="1" fill="#000"/><rect x="48" y="72" width="1" height="1" fill="#000"/><rect x="50" y="72" width="1" height="1" fill="#000"/><rect x="52" y="72" width="1" height="1" fill="#000"/><rect x="54" y="66" width="14" height="13" fill="#000"/><rect x="55" y="67" width="12" height="8" fill="#ffff00"/><rect x="55" y="76" width="5" height="2" fill="#ffff00"/><rect x="62" y="76" width="5" height="2" fill="#ffff00"/><rect x="55" y="67" width="1" height="2" fill="#000"/><rect x="56" y="68" width="1" height="1" fill="#000"/><g fill="#6a6aa8"><rect x="57" y="69" width="3" height="1"/><rect x="61" y="69" width="2" height="1"/><rect x="64" y="69" width="2" height="1"/><rect x="57" y="70" width="4" height="1"/><rect x="63" y="70" width="3" height="1"/><rect x="57" y="72" width="1" height="1"/><rect x="59" y="72" width="1" height="1"/><rect x="62" y="72" width="2" height="1"/><rect x="57" y="73" width="3" height="1"/><rect x="61" y="73" width="5" height="1"/></g><rect x="46" y="88" width="1" height="1" fill="#000"/><rect x="48" y="88" width="1" height="1" fill="#000"/><rect x="50" y="88" width="1" height="1" fill="#000"/><rect x="52" y="88" width="1" height="1" fill="#000"/><rect x="54" y="82" width="14" height="13" fill="#000"/><rect x="55" y="83" width="12" height="8" fill="#ffff00"/><rect x="55" y="92" width="5" height="2" fill="#ffff00"/><rect x="62" y="92" width="5" height="2" fill="#ffff00"/><rect x="55" y="83" width="1" height="2" fill="#000"/><rect x="56" y="84" width="1" height="1" fill="#000"/><g fill="#6a6aa8"><rect x="57" y="85" width="3" height="1"/><rect x="61" y="85" width="2" height="1"/><rect x="64" y="85" width="2" height="1"/><rect x="57" y="86" width="4" height="1"/><rect x="63" y="86" width="3" height="1"/><rect x="57" y="88" width="1" height="1"/><rect x="59" y="88" width="1" height="1"/><rect x="62" y="88" width="2" height="1"/><rect x="57" y="89" width="3" height="1"/><rect x="61" y="89" width="5" height="1"/></g><rect x="46" y="104" width="1" height="1" fill="#000"/><rect x="48" y="104" width="1" height="1" fill="#000"/><rect x="50" y="104" width="1" height="1" fill="#000"/><rect x="52" y="104" width="1" height="1" fill="#000"/><rect x="54" y="98" width="14" height="13" fill="#000"/><rect x="55" y="99" width="12" height="8" fill="#ffff00"/><rect x="55" y="108" width="5" height="2" fill="#ffff00"/><rect x="62" y="108" width="5" height="2" fill="#ffff00"/><rect x="55" y="99" width="1" height="2" fill="#000"/><rect x="56" y="100" width="1" height="1" fill="#000"/><g fill="#6a6aa8"><rect x="57" y="101" width="3" height="1"/><rect x="61" y="101" width="2" height="1"/><rect x="64" y="101" width="2" height="1"/><rect x="57" y="102" width="4" height="1"/><rect x="63" y="102" width="3" height="1"/><rect x="57" y="104" width="1" height="1"/><rect x="59" y="104" width="1" height="1"/><rect x="62" y="104" width="2" height="1"/><rect x="57" y="105" width="3" height="1"/><rect x="61" y="105" width="5" height="1"/></g><rect x="46" y="120" width="1" height="1" fill="#000"/><rect x="48" y="120" width="1" height="1" fill="#000"/><rect x="50" y="120" width="1" height="1" fill="#000"/><rect x="52" y="120" width="1" height="1" fill="#000"/><rect x="54" y="114" width="14" height="13" fill="#000"/><rect x="55" y="115" width="12" height="8" fill="#ffff00"/><rect x="55" y="124" width="5" height="2" fill="#ffff00"/><rect x="62" y="124" width="5" height="2" fill="#ffff00"/><rect x="55" y="115" width="1" height="2" fill="#000"/><rect x="56" y="116" width="1" height="1" fill="#000"/><g fill="#6a6aa8"><rect x="57" y="117" width="3" height="1"/><rect x="61" y="117" width="2" height="1"/><rect x="64" y="117" width="2" height="1"/><rect x="57" y="118" width="4" height="1"/><rect x="63" y="118" width="3" height="1"/><rect x="57" y="120" width="1" height="1"/><rect x="59" y="120" width="1" height="1"/><rect x="62" y="120" width="2" height="1"/><rect x="57" y="121" width="3" height="1"/><rect x="61" y="121" width="5" height="1"/></g><rect x="46" y="136" width="1" height="1" fill="#000"/><rect x="48" y="136" width="1" height="1" fill="#000"/><rect x="50" y="136" width="1" height="1" fill="#000"/><rect x="52" y="136" width="1" height="1" fill="#000"/><rect x="54" y="130" width="14" height="13" fill="#000"/><rect x="55" y="131" width="12" height="8" fill="#ffff00"/><rect x="55" y="140" width="5" height="2" fill="#ffff00"/><rect x="62" y="140" width="5" height="2" fill="#ffff00"/><rect x="55" y="131" width="1" height="2" fill="#000"/><rect x="56" y="132" width="1" height="1" fill="#000"/><g fill="#6a6aa8"><rect x="57" y="133" width="3" height="1"/><rect x="61" y="133" width="2" height="1"/><rect x="64" y="133" width="2" height="1"/><rect x="57" y="134" width="4" height="1"/><rect x="63" y="134" width="3" height="1"/><rect x="57" y="136" width="1" height="1"/><rect x="59" y="136" width="1" height="1"/><rect x="62" y="136" width="2" height="1"/><rect x="57" y="137" width="3" height="1"/><rect x="61" y="137" width="5" height="1"/></g><rect x="25" y="147" width="9" height="9" fill="#fff"/><rect x="25" y="147" width="9" height="1" fill="#a0a0a0"/><rect x="25" y="155" width="9" height="1" fill="#a0a0a0"/><rect x="25" y="147" width="1" height="9" fill="#a0a0a0"/><rect x="33" y="147" width="1" height="9" fill="#a0a0a0"/><rect x="27" y="151" width="5" height="1" fill="#000"/><rect x="35" y="152" width="1" height="1" fill="#000"/><rect x="38" y="146" width="14" height="12" fill="#000"/><rect x="39" y="147" width="12" height="10" fill="#00ff00"/><g fill="#a878a8"><rect x="41" y="149" width="3" height="1"/><rect x="45" y="149" width="2" height="1"/><rect x="48" y="149" width="2" height="1"/><rect x="40" y="150" width="5" height="1"/><rect x="47" y="150" width="3" height="1"/><rect x="41" y="152" width="1" height="1"/><rect x="43" y="152" width="1" height="1"/><rect x="46" y="152" width="2" height="1"/><rect x="41" y="153" width="3" height="1"/><rect x="45" y="153" width="5" height="1"/><rect x="39" y="155" width="3" height="1"/><rect x="48" y="155" width="3" height="1"/></g><rect x="46" y="168" width="1" height="1" fill="#000"/><rect x="48" y="168" width="1" height="1" fill="#000"/><rect x="50" y="168" width="1" height="1" fill="#000"/><rect x="52" y="168" width="1" height="1" fill="#000"/><rect x="54.5" y="162.5" width="13" height="11" rx="3" ry="3" fill="#00ffff" stroke="#000" shape-rendering="auto"/><path d="M56.5,166L59,163.5" stroke="#000" shape-rendering="auto"/><g fill="#a07878"><rect x="58" y="165" width="3" height="1"/><rect x="63" y="165" width="2" height="1"/><rect x="57" y="167" width="5" height="1"/><rect x="63" y="167" width="3" height="1"/><rect x="57" y="170" width="1" height="1"/><rect x="59" y="170" width="1" height="1"/><rect x="62" y="170" width="1" height="1"/><rect x="64" y="170" width="1" height="1"/><rect x="57" y="171" width="3" height="1"/><rect x="62" y="171" width="3" height="1"/></g><rect x="46" y="184" width="1" height="1" fill="#000"/><rect x="48" y="184" width="1" height="1" fill="#000"/><rect x="50" y="184" width="1" height="1" fill="#000"/><rect x="52" y="184" width="1" height="1" fill="#000"/><rect x="54.5" y="178.5" width="13" height="11" rx="3" ry="3" fill="#00ffff" stroke="#000" shape-rendering="auto"/><path d="M56.5,182L59,179.5" stroke="#000" shape-rendering="auto"/><g fill="#a07878"><rect x="58" y="181" width="3" height="1"/><rect x="63" y="181" width="2" height="1"/><rect x="57" y="183" width="5" height="1"/><rect x="63" y="183" width="3" height="1"/><rect x="57" y="186" width="1" height="1"/><rect x="59" y="186" width="1" height="1"/><rect x="62" y="186" width="1" height="1"/><rect x="64" y="186" width="1" height="1"/><rect x="57" y="187" width="3" height="1"/><rect x="62" y="187" width="3" height="1"/></g><rect x="46" y="200" width="1" height="1" fill="#000"/><rect x="48" y="200" width="1" height="1" fill="#000"/><rect x="50" y="200" width="1" height="1" fill="#000"/><rect x="52" y="200" width="1" height="1" fill="#000"/><rect x="54.5" y="194.5" width="13" height="11" rx="3" ry="3" fill="#00ffff" stroke="#000" shape-rendering="auto"/><path d="M56.5,198L59,195.5" stroke="#000" shape-rendering="auto"/><g fill="#a07878"><rect x="58" y="197" width="3" height="1"/><rect x="63" y="197" width="2" height="1"/><rect x="57" y="199" width="5" height="1"/><rect x="63" y="199" width="3" height="1"/><rect x="57" y="202" width="1" height="1"/><rect x="59" y="202" width="1" height="1"/><rect x="62" y="202" width="1" height="1"/><rect x="64" y="202" width="1" height="1"/><rect x="57" y="203" width="3" height="1"/><rect x="62" y="203" width="3" height="1"/></g><rect x="41" y="211" width="9" height="9" fill="#fff"/><rect x="41" y="211" width="9" height="1" fill="#a0a0a0"/><rect x="41" y="219" width="9" height="1" fill="#a0a0a0"/><rect x="41" y="211" width="1" height="9" fill="#a0a0a0"/><rect x="49" y="211" width="1" height="9" fill="#a0a0a0"/><rect x="43" y="215" width="5" height="1" fill="#000"/><rect x="51" y="216" width="1" height="1" fill="#000"/><rect x="54.5" y="210.5" width="13" height="11" rx="3" ry="3" fill="#00ffff" stroke="#000" shape-rendering="auto"/><path d="M56.5,214L59,211.5" stroke="#000" shape-rendering="auto"/><g fill="#a07878"><rect x="58" y="213" width="3" height="1"/><rect x="63" y="213" width="2" height="1"/><rect x="57" y="215" width="5" height="1"/><rect x="63" y="215" width="3" height="1"/><rect x="57" y="218" width="1" height="1"/><rect x="59" y="218" width="1" height="1"/><rect x="62" y="218" width="1" height="1"/><rect x="64" y="218" width="1" height="1"/><rect x="57" y="219" width="3" height="1"/><rect x="62" y="219" width="3" height="1"/></g><rect x="62" y="232" width="1" height="1" fill="#000"/><rect x="64" y="232" width="1" height="1" fill="#000"/><rect x="66" y="232" width="1" height="1" fill="#000"/><rect x="68" y="232" width="1" height="1" fill="#000"/><rect x="70" y="226" width="14" height="13" fill="#000"/><rect x="71" y="227" width="12" height="8" fill="#ffff00"/><rect x="71" y="236" width="5" height="2" fill="#ffff00"/><rect x="78" y="236" width="5" height="2" fill="#ffff00"/><rect x="71" y="227" width="1" height="2" fill="#000"/><rect x="72" y="228" width="1" height="1" fill="#000"/><g fill="#6a6aa8"><rect x="73" y="229" width="3" height="1"/><rect x="77" y="229" width="2" height="1"/><rect x="80" y="229" width="2" height="1"/><rect x="73" y="230" width="4" height="1"/><rect x="79" y="230" width="3" height="1"/><rect x="73" y="232" width="1" height="1"/><rect x="75" y="232" width="1" height="1"/><rect x="78" y="232" width="2" height="1"/><rect x="73" y="233" width="3" height="1"/><rect x="77" y="233" width="5" height="1"/></g><rect x="62" y="248" width="1" height="1" fill="#000"/><rect x="64" y="248" width="1" height="1" fill="#000"/><rect x="66" y="248" width="1" height="1" fill="#000"/><rect x="68" y="248" width="1" height="1" fill="#000"/><rect x="70" y="242" width="14" height="13" fill="#000"/><rect x="71" y="243" width="12" height="8" fill="#ffff00"/><rect x="71" y="252" width="5" height="2" fill="#ffff00"/><rect x="78" y="252" width="5" height="2" fill="#ffff00"/><rect x="71" y="243" width="1" height="2" fill="#000"/><rect x="72" y="244" width="1" height="1" fill="#000"/><g fill="#6a6aa8"><rect x="73" y="245" width="3" height="1"/><rect x="77" y="245" width="2" height="1"/><rect x="80" y="245" width="2" height="1"/><rect x="73" y="246" width="4" height="1"/><rect x="79" y="246" width="3" height="1"/><rect x="73" y="248" width="1" height="1"/><rect x="75" y="248" width="1" height="1"/><rect x="78" y="248" width="2" height="1"/><rect x="73" y="249" width="3" height="1"/><rect x="77" y="249" width="5" height="1"/></g><rect x="62" y="264" width="1" height="1" fill="#000"/><rect x="64" y="264" width="1" height="1" fill="#000"/><rect x="66" y="264" width="1" height="1" fill="#000"/><rect x="68" y="264" width="1" height="1" fill="#000"/><rect x="70" y="258" width="14" height="13" fill="#000"/><rect x="71" y="259" width="12" height="8" fill="#ffff00"/><rect x="71" y="268" width="5" height="2" fill="#ffff00"/><rect x="78" y="268" width="5" height="2" fill="#ffff00"/><rect x="71" y="259" width="1" height="2" fill="#000"/><rect x="72" y="260" width="1" height="1" fill="#000"/><g fill="#6a6aa8"><rect x="73" y="261" width="3" height="1"/><rect x="77" y="261" width="2" height="1"/><rect x="80" y="261" width="2" height="1"/><rect x="73" y="262" width="4" height="1"/><rect x="79" y="262" width="3" height="1"/><rect x="73" y="264" width="1" height="1"/><rect x="75" y="264" width="1" height="1"/><rect x="78" y="264" width="2" height="1"/><rect x="73" y="265" width="3" height="1"/><rect x="77" y="265" width="5" height="1"/></g><rect x="62" y="280" width="1" height="1" fill="#000"/><rect x="64" y="280" width="1" height="1" fill="#000"/><rect x="66" y="280" width="1" height="1" fill="#000"/><rect x="68" y="280" width="1" height="1" fill="#000"/><rect x="70" y="274" width="14" height="13" fill="#000"/><rect x="71" y="275" width="12" height="8" fill="#ffff00"/><rect x="71" y="284" width="5" height="2" fill="#ffff00"/><rect x="78" y="284" width="5" height="2" fill="#ffff00"/><rect x="71" y="275" width="1" height="2" fill="#000"/><rect x="72" y="276" width="1" height="1" fill="#000"/><g fill="#6a6aa8"><rect x="73" y="277" width="3" height="1"/><rect x="77" y="277" width="2" height="1"/><rect x="80" y="277" width="2" height="1"/><rect x="73" y="278" width="4" height="1"/><rect x="79" y="278" width="3" height="1"/><rect x="73" y="280" width="1" height="1"/><rect x="75" y="280" width="1" height="1"/><rect x="78" y="280" width="2" height="1"/><rect x="73" y="281" width="3" height="1"/><rect x="77" y="281" width="5" height="1"/></g><rect x="62" y="296" width="1" height="1" fill="#000"/><rect x="64" y="296" width="1" height="1" fill="#000"/><rect x="66" y="296" width="1" height="1" fill="#000"/><rect x="68" y="296" width="1" height="1" fill="#000"/><rect x="70" y="290" width="14" height="13" fill="#000"/><rect x="71" y="291" width="12" height="8" fill="#ffff00"/><rect x="71" y="300" width="5" height="2" fill="#ffff00"/><rect x="78" y="300" width="5" height="2" fill="#ffff00"/><rect x="71" y="291" width="1" height="2" fill="#000"/><rect x="72" y="292" width="1" height="1" fill="#000"/><g fill="#6a6aa8"><rect x="73" y="293" width="3" height="1"/><rect x="77" y="293" width="2" height="1"/><rect x="80" y="293" width="2" height="1"/><rect x="73" y="294" width="4" height="1"/><rect x="79" y="294" width="3" height="1"/><rect x="73" y="296" width="1" height="1"/><rect x="75" y="296" width="1" height="1"/><rect x="78" y="296" width="2" height="1"/><rect x="73" y="297" width="3" height="1"/><rect x="77" y="297" width="5" height="1"/></g><rect x="62" y="312" width="1" height="1" fill="#000"/><rect x="64" y="312" width="1" height="1" fill="#000"/><rect x="66" y="312" width="1" height="1" fill="#000"/><rect x="68" y="312" width="1" height="1" fill="#000"/><rect x="70" y="306" width="14" height="13" fill="#000"/><rect x="71" y="307" width="12" height="8" fill="#ffff00"/><rect x="71" y="316" width="5" height="2" fill="#ffff00"/><rect x="78" y="316" width="5" height="2" fill="#ffff00"/><rect x="71" y="307" width="1" height="2" fill="#000"/><rect x="72" y="308" width="1" height="1" fill="#000"/><g fill="#6a6aa8"><rect x="73" y="309" width="3" height="1"/><rect x="77" y="309" width="2" height="1"/><rect x="80" y="309" width="2" height="1"/><rect x="73" y="310" width="4" height="1"/><rect x="79" y="310" width="3" height="1"/><rect x="73" y="312" width="1" height="1"/><rect x="75" y="312" width="1" height="1"/><rect x="78" y="312" width="2" height="1"/><rect x="73" y="313" width="3" height="1"/><rect x="77" y="313" width="5" height="1"/></g><rect x="62" y="328" width="1" height="1" fill="#000"/><rect x="64" y="328" width="1" height="1" fill="#000"/><rect x="66" y="328" width="1" height="1" fill="#000"/><rect x="68" y="328" width="1" height="1" fill="#000"/><rect x="70" y="322" width="14" height="13" fill="#000"/><rect x="71" y="323" width="12" height="8" fill="#ffff00"/><rect x="71" y="332" width="5" height="2" fill="#ffff00"/><rect x="78" y="332" width="5" height="2" fill="#ffff00"/><rect x="71" y="323" width="1" height="2" fill="#000"/><rect x="72" y="324" width="1" height="1" fill="#000"/><g fill="#6a6aa8"><rect x="73" y="325" width="3" height="1"/><rect x="77" y="325" width="2" height="1"/><rect x="80" y="325" width="2" height="1"/><rect x="73" y="326" width="4" height="1"/><rect x="79" y="326" width="3" height="1"/><rect x="73" y="328" width="1" height="1"/><rect x="75" y="328" width="1" height="1"/><rect x="78" y="328" width="2" height="1"/><rect x="73" y="329" width="3" height="1"/><rect x="77" y="329" width="5" height="1"/></g><rect x="25" y="339" width="9" height="9" fill="#fff"/><rect x="25" y="339" width="9" height="1" fill="#a0a0a0"/><rect x="25" y="347" width="9" height="1" fill="#a0a0a0"/><rect x="25" y="339" width="1" height="9" fill="#a0a0a0"/><rect x="33" y="339" width="1" height="9" fill="#a0a0a0"/><rect x="27" y="343" width="5" height="1" fill="#000"/><rect x="35" y="344" width="1" height="1" fill="#000"/><rect x="38" y="338" width="14" height="12" fill="#000"/><rect x="39" y="339" width="12" height="10" fill="#00ff00"/><g fill="#a878a8"><rect x="41" y="341" width="3" height="1"/><rect x="45" y="341" width="2" height="1"/><rect x="48" y="341" width="2" height="1"/><rect x="40" y="342" width="5" height="1"/><rect x="47" y="342" width="3" height="1"/><rect x="41" y="344" width="1" height="1"/><rect x="43" y="344" width="1" height="1"/><rect x="46" y="344" width="2" height="1"/><rect x="41" y="345" width="3" height="1"/><rect x="45" y="345" width="5" height="1"/><rect x="39" y="347" width="3" height="1"/><rect x="48" y="347" width="3" height="1"/></g><rect x="46" y="360" width="1" height="1" fill="#000"/><rect x="48" y="360" width="1" height="1" fill="#000"/><rect x="50" y="360" width="1" height="1" fill="#000"/><rect x="52" y="360" width="1" height="1" fill="#000"/><rect x="54" y="354" width="14" height="13" fill="#000"/><rect x="55" y="355" width="12" height="8" fill="#ffff00"/><rect x="55" y="364" width="5" height="2" fill="#ffff00"/><rect x="62" y="364" width="5" height="2" fill="#ffff00"/><rect x="55" y="355" width="1" height="2" fill="#000"/><rect x="56" y="356" width="1" height="1" fill="#000"/><g fill="#6a6aa8"><rect x="57" y="357" width="3" height="1"/><rect x="61" y="357" width="2" height="1"/><rect x="64" y="357" width="2" height="1"/><rect x="57" y="358" width="4" height="1"/><rect x="63" y="358" width="3" height="1"/><rect x="57" y="360" width="1" height="1"/><rect x="59" y="360" width="1" height="1"/><rect x="62" y="360" width="2" height="1"/><rect x="57" y="361" width="3" height="1"/><rect x="61" y="361" width="5" height="1"/></g><rect x="46" y="376" width="1" height="1" fill="#000"/><rect x="48" y="376" width="1" height="1" fill="#000"/><rect x="50" y="376" width="1" height="1" fill="#000"/><rect x="52" y="376" width="1" height="1" fill="#000"/><rect x="54" y="370" width="14" height="13" fill="#000"/><rect x="55" y="371" width="12" height="8" fill="#ffff00"/><rect x="55" y="380" width="5" height="2" fill="#ffff00"/><rect x="62" y="380" width="5" height="2" fill="#ffff00"/><rect x="55" y="371" width="1" height="2" fill="#000"/><rect x="56" y="372" width="1" height="1" fill="#000"/><g fill="#6a6aa8"><rect x="57" y="373" width="3" height="1"/><rect x="61" y="373" width="2" height="1"/><rect x="64" y="373" width="2" height="1"/><rect x="57" y="374" width="4" height="1"/><rect x="63" y="374" width="3" height="1"/><rect x="57" y="376" width="1" height="1"/><rect x="59" y="376" width="1" height="1"/><rect x="62" y="376" width="2" height="1"/><rect x="57" y="377" width="3" height="1"/><rect x="61" y="377" width="5" height="1"/></g><rect x="46" y="392" width="1" height="1" fill="#000"/><rect x="48" y="392" width="1" height="1" fill="#000"/><rect x="50" y="392" width="1" height="1" fill="#000"/><rect x="52" y="392" width="1" height="1" fill="#000"/><rect x="54" y="386" width="14" height="13" fill="#000"/><rect x="55" y="387" width="12" height="8" fill="#ffff00"/><rect x="55" y="396" width="5" height="2" fill="#ffff00"/><rect x="62" y="396" width="5" height="2" fill="#ffff00"/><rect x="55" y="387" width="1" height="2" fill="#000"/><rect x="56" y="388" width="1" height="1" fill="#000"/><g fill="#6a6aa8"><rect x="57" y="389" width="3" height="1"/><rect x="61" y="389" width="2" height="1"/><rect x="64" y="389" width="2" height="1"/><rect x="57" y="390" width="4" height="1"/><rect x="63" y="390" width="3" height="1"/><rect x="57" y="392" width="1" height="1"/><rect x="59" y="392" width="1" height="1"/><rect x="62" y="392" width="2" height="1"/><rect x="57" y="393" width="3" height="1"/><rect x="61" y="393" width="5" height="1"/></g><rect x="46" y="408" width="1" height="1" fill="#000"/><rect x="48" y="408" width="1" height="1" fill="#000"/><rect x="50" y="408" width="1" height="1" fill="#000"/><rect x="52" y="408" width="1" height="1" fill="#000"/><rect x="54" y="402" width="14" height="13" fill="#000"/><rect x="55" y="403" width="12" height="8" fill="#ffff00"/><rect x="55" y="412" width="5" height="2" fill="#ffff00"/><rect x="62" y="412" width="5" height="2" fill="#ffff00"/><rect x="55" y="403" width="1" height="2" fill="#000"/><rect x="56" y="404" width="1" height="1" fill="#000"/><g fill="#6a6aa8"><rect x="57" y="405" width="3" height="1"/><rect x="61" y="405" width="2" height="1"/><rect x="64" y="405" width="2" height="1"/><rect x="57" y="406" width="4" height="1"/><rect x="63" y="406" width="3" height="1"/><rect x="57" y="408" width="1" height="1"/><rect x="59" y="408" width="1" height="1"/><rect x="62" y="408" width="2" height="1"/><rect x="57" y="409" width="3" height="1"/><rect x="61" y="409" width="5" height="1"/></g><rect x="46" y="424" width="1" height="1" fill="#000"/><rect x="48" y="424" width="1" height="1" fill="#000"/><rect x="50" y="424" width="1" height="1" fill="#000"/><rect x="52" y="424" width="1" height="1" fill="#000"/><rect x="54" y="418" width="14" height="13" fill="#000"/><rect x="55" y="419" width="12" height="8" fill="#ffff00"/><rect x="55" y="428" width="5" height="2" fill="#ffff00"/><rect x="62" y="428" width="5" height="2" fill="#ffff00"/><rect x="55" y="419" width="1" height="2" fill="#000"/><rect x="56" y="420" width="1" height="1" fill="#000"/><g fill="#6a6aa8"><rect x="57" y="421" width="3" height="1"/><rect x="61" y="421" width="2" height="1"/><rect x="64" y="421" width="2" height="1"/><rect x="57" y="422" width="4" height="1"/><rect x="63" y="422" width="3" height="1"/><rect x="57" y="424" width="1" height="1"/><rect x="59" y="424" width="1" height="1"/><rect x="62" y="424" width="2" height="1"/><rect x="57" y="425" width="3" height="1"/><rect x="61" y="425" width="5" height="1"/></g></svg><div class="tr" style="left:28px;top:0px;color:#fff;font-weight:bold;font-size:12px">SiteSales</div><div class="tr" style="left:44px;top:16px;color:#000">Работа с онлайн магазином</div><div class="tr" style="left:60px;top:32px;color:#fff">Выбор покупки</div><div class="tr" style="left:60px;top:48px;color:#000">Оформление заказа</div><div class="tr" style="left:76px;top:64px;color:#000">Создание заявки</div><div class="tr" style="left:76px;top:80px;color:#000">Проверка заявки</div><div class="tr" style="left:76px;top:96px;color:#000">Тип оплаты</div><div class="tr" style="left:76px;top:112px;color:#000">Тип доставки</div><div class="tr" style="left:76px;top:128px;color:#000">Отправка заявки</div><div class="tr" style="left:60px;top:144px;color:#000">Оформление товара</div><div class="tr" style="left:76px;top:160px;color:#000">Проверка клиента (Кредитоспособность)</div><div class="tr" style="left:76px;top:176px;color:#000">Подбор товара</div><div class="tr" style="left:76px;top:192px;color:#000">Обращение к службе доставки</div><div class="tr" style="left:76px;top:208px;color:#000">Формирование маршрута</div><div class="tr" style="left:92px;top:224px;color:#000">Наличие товара на складе</div><div class="tr" style="left:92px;top:240px;color:#000">Запрос в службу заказа</div><div class="tr" style="left:92px;top:256px;color:#000">Подтверждение заказа</div><div class="tr" style="left:92px;top:272px;color:#000">Преобретение товара</div><div class="tr" style="left:92px;top:288px;color:#000">Списать товар</div><div class="tr" style="left:92px;top:304px;color:#000">Загрузить товар</div><div class="tr" style="left:92px;top:320px;color:#000">Внести коррективы</div><div class="tr" style="left:60px;top:336px;color:#000">Доставка товара</div><div class="tr" style="left:76px;top:352px;color:#000">Информирование Заказчика</div><div class="tr" style="left:76px;top:368px;color:#000">Тип доставки:</div><div class="tr" style="left:76px;top:384px;color:#000">Проверка соответствия</div><div class="tr" style="left:76px;top:400px;color:#000">Информирование Заказчика</div><div class="tr" style="left:76px;top:416px;color:#000">Отправка товара</div></div>
<div class="a" style="left:3px;top:829px;width:210px;height:24px;background:#fff;"></div>
<div class="a" style="left:0px;top:829px;width:12px;height:1px;background:#000"></div>
<div class="a" style="left:75px;top:829px;width:138px;height:1px;background:#000"></div>
<div class="a" style="left:12px;top:829px;width:64px;height:23px;background:#f0f0f0;border-left:1px solid #fff;border-right:1px solid #000;border-bottom:1px solid #000"></div>
<div class="a" style="left:144px;top:833px;width:1px;height:16px;background:#a0a0a0"></div>
<div class="a" style="left:206px;top:833px;width:1px;height:16px;background:#a0a0a0"></div>
<svg class="a" style="left:0;top:829px" width="215" height="24" shape-rendering="crispEdges">
<rect x="21" y="3" width="5" height="3" fill="#f00" stroke="#000"/><rect x="17" y="9" width="5" height="3" fill="#0f0" stroke="#000"/><rect x="25" y="9" width="5" height="3" fill="#ff0" stroke="#000"/>
<rect x="19" y="16" width="5" height="3" fill="#f0f" stroke="#000"/><rect x="28" y="16" width="5" height="3" fill="#0ff" stroke="#000"/>
<path d="M23,6L19,9M24,6L27,9M27,12L22,16M27,12L30,16" stroke="#000" fill="none" shape-rendering="auto"/>
<rect x="82.5" y="5.5" width="11" height="7" fill="#fff" stroke="#000"/><rect x="85.5" y="8.5" width="11" height="7" fill="#fff" stroke="#000"/>
<path d="M87,11H95M87,13H95" stroke="#000"/>
<rect x="151" y="5" width="5" height="4" fill="#f00" stroke="#000"/><rect x="158" y="5" width="5" height="4" fill="#ff0" stroke="#000"/>
<rect x="151" y="12" width="5" height="4" fill="#0f0" stroke="#000"/><rect x="158" y="12" width="5" height="4" fill="#f0f" stroke="#000"/>
</svg>
<div class="a" style="left:36px;top:833px;font-size:11px;line-height:16px;font-weight:bold;letter-spacing:0.6px">Acti...</div>
<div class="a" style="left:101px;top:833px;font-size:11px;line-height:16px">Diag...</div>
<div class="a" style="left:169px;top:833px;font-size:11px;line-height:16px">Obj...</div>
<div class="a" style="left:226px;top:142px;width:1372px;height:716px;background:#fffaf0;border-top:1px solid #a0a0a0;border-left:1px solid #a0a0a0;box-shadow:inset 1px 1px 0 #696969"></div>
<div class="a" style="left:1582px;top:144px;width:16px;height:697px;background:#f0f0f0;"></div>
<div class="a" style="left:1582px;top:161px;width:15px;height:17px;background:#cdcdcd;"></div>
<svg class="a" style="left:1582px;top:144px" width="16" height="697"><path d="M4.5,11.5L8,8L11.5,11.5" fill="none" stroke="#505050" stroke-width="2"/><path d="M4.5,686L8,689.5L11.5,686" fill="none" stroke="#505050" stroke-width="2"/></svg>
<div class="a" style="left:228px;top:841px;width:1370px;height:17px;background:#f0f0f0;"></div>
<div class="a" style="left:257px;top:842px;width:17px;height:15px;background:#cdcdcd;"></div>
<svg class="a" style="left:228px;top:841px" width="1354" height="17"><path d="M10.5,5.5L7,9L10.5,12.5" fill="none" stroke="#505050" stroke-width="2"/><path d="M1342.5,5.5L1346,9L1342.5,12.5" fill="none" stroke="#505050" stroke-width="2"/></svg>
<div class="a" style="left:226px;top:858px;width:1373px;height:1px;background:#e3e3e3"></div>
<div class="a" style="left:1598px;top:142px;width:1px;height:717px;background:#e3e3e3"></div>
<!-- DIAGRAM -->
<svg class="a" style="left:0;top:0" width="1600" height="860" viewBox="0 0 1600 860" font-family="Liberation Sans" font-size="11">
<defs>
<pattern id="sh" x="0" y="0" width="4" height="4" patternUnits="userSpaceOnUse">
<rect width="4" height="4" fill="#fff"/>
<rect x="0" y="0" width="1" height="1" fill="#000"/>
<rect x="2" y="1" width="1" height="1" fill="#000"/>
<rect x="1" y="2" width="1" height="1" fill="#000"/>
<rect x="3" y="3" width="1" height="1" fill="#000"/>
</pattern>
</defs>
<g shape-rendering="crispEdges" fill="none" stroke="#000" stroke-width="1">
<!-- form frame -->
<rect x="228.5" y="159.5" width="920" height="636"/>
<path d="M228,232.5H1149 M309.5,159V232 M688.5,159V232 M709.5,159V232 M863.5,159V232 M1016.5,159V232 M688,177.5H1016 M688,196.5H1016 M688,214.5H1016"/>
<path d="M228,743.5H1149 M403.5,743V795 M906.5,743V795 M1083.5,778V795 M1083,778.5H1149"/>
</g>
<g shape-rendering="crispEdges" fill="#000">
<rect x="689" y="160" width="20" height="17"/>
<rect x="1058" y="194" width="43" height="16"/>
</g>
<g font-size="10.7" fill="#000">
<text x="232" y="172" textLength="46" lengthAdjust="spacingAndGlyphs">USED AT:</text>
<text x="314" y="172" textLength="46" lengthAdjust="spacingAndGlyphs">AUTHOR:</text>
<text x="314" y="189" textLength="47.5" lengthAdjust="spacingAndGlyphs">PROJECT:</text><text x="368.4" y="189" textLength="44.4" lengthAdjust="spacingAndGlyphs">SiteSales</text>
<text x="314" y="227" textLength="36" lengthAdjust="spacingAndGlyphs">NOTES:</text>
<text x="357" y="227">1</text><text x="369" y="227">2</text><text x="381" y="227">3</text><text x="393" y="227">4</text><text x="405" y="227">5</text><text x="417" y="227">6</text><text x="429" y="227">7</text><text x="441" y="227">8</text><text x="453" y="227">9</text><text x="465" y="227">10</text>
<text x="593" y="172" textLength="29.7" lengthAdjust="spacingAndGlyphs">DATE:</text><text x="630" y="172" textLength="54" lengthAdjust="spacingAndGlyphs">09.10.2013</text>
<text x="593" y="189" textLength="23.5" lengthAdjust="spacingAndGlyphs">REV:</text><text x="630" y="189" textLength="54" lengthAdjust="spacingAndGlyphs">11.10.2013</text>
<text x="713" y="172" textLength="49" lengthAdjust="spacingAndGlyphs">WORKING</text>
<text x="713" y="191" textLength="33.7" lengthAdjust="spacingAndGlyphs">DRAFT</text>
<text x="713" y="209" textLength="77" lengthAdjust="spacingAndGlyphs">RECOMMENDED</text>
<text x="713" y="227" textLength="66" lengthAdjust="spacingAndGlyphs">PUBLICATION</text>
<text x="867.4" y="172" textLength="40.3" lengthAdjust="spacingAndGlyphs">READER</text>
<text x="983.3" y="172" textLength="26" lengthAdjust="spacingAndGlyphs">DATE</text>
<text x="1020.5" y="172" textLength="49" lengthAdjust="spacingAndGlyphs">CONTEXT:</text>
<text x="1020.5" y="227" textLength="17" lengthAdjust="spacingAndGlyphs">A-0</text>
</g>
<g font-size="11">
<text x="232.5" y="754" textLength="30" lengthAdjust="spacingAndGlyphs">NODE:</text>
<text x="407" y="754" textLength="28.7" lengthAdjust="spacingAndGlyphs">TITLE:</text>
<text x="910.5" y="754" textLength="44" lengthAdjust="spacingAndGlyphs">NUMBER:</text>
</g>
<text x="302" y="785" font-size="19.4">A0</text>
<text x="544" y="761" font-size="19.4">Работа с онлайн магазином</text>

<!-- shadows -->
<g shape-rendering="crispEdges" fill="url(#sh)">
<rect x="319" y="298" width="126" height="59"/>
<rect x="477" y="381" width="125" height="59"/>
<rect x="639" y="460" width="125" height="59"/>
<rect x="788" y="543" width="126" height="59"/>
</g>
<g shape-rendering="crispEdges" fill="#fffaf0">
<rect x="310" y="289" width="126" height="59"/>
<rect x="468" y="372" width="125" height="59"/>
<rect x="630" y="451" width="125" height="59"/>
<rect x="779" y="534" width="126" height="59"/>
</g>
<!-- arrows -->
<g fill="none" stroke="#000" stroke-width="1" shape-rendering="crispEdges">
<path d="M245.5,319.5L302.5,319.5"/>
<path d="M436.5,315.5L979.5,315.5Q984.5,315.5 984.5,320.5L984.5,534.5Q984.5,539.5 988.5,539.5L992.5,539.5"/>
<path d="M905.5,539.5L1121.5,539.5"/>
<path d="M905.5,560.5L1121.5,560.5"/>
<path d="M436.5,344.5L456.5,344.5Q460.5,344.5 460.5,348.5L460.5,399.5"/>
<path d="M593.5,398.5L937.5,398.5Q942.5,398.5 942.5,403.5L942.5,534.5Q942.5,539.5 946.5,539.5L950.5,539.5"/>
<path d="M593.5,427.5L605.5,427.5Q610.5,427.5 610.5,432.5L610.5,476.5Q610.5,481.5 615.5,481.5L622.5,481.5"/>
<path d="M755.5,481.5L912.5,481.5Q917.5,481.5 917.5,486.5L917.5,534.5Q917.5,539.5 921.5,539.5L925.5,539.5"/>
<path d="M755.5,506.5L763.5,506.5Q768.5,506.5 768.5,511.5L768.5,559.5Q768.5,564.5 770,564.5L771.5,564.5"/>
<path d="M905.5,578.5L909.5,578.5Q913.5,578.5 913.5,584.5L913.5,625.5Q913.5,631.5 907.5,631.5L624.5,631.5Q618.5,631.5 618.5,625.5L618.5,505.5"/>
<path d="M369.5,722.5L369.5,358.5"/>
<path d="M369.5,612.5L369.5,605.5Q369.5,601.5 373.5,601.5L838.5,601.5Q842.5,601.5 842.5,600L842.5,598.5"/>
<path d="M535.5,440.5L535.5,596.5Q535.5,601.5 531.5,601.5L527.5,601.5"/>
<path d="M693.5,519.5L693.5,596.5Q693.5,601.5 689.5,601.5L685.5,601.5"/>
<path d="M672.5,722.5L672.5,519.5"/>
<path d="M672.5,670.5L672.5,665.5Q672.5,660.5 667.5,660.5L507.5,660.5Q502.5,660.5 502.5,655.5L502.5,440.5"/>
<path d="M672.5,674.5L672.5,669.5Q672.5,664.5 677.5,664.5L866.5,664.5Q871.5,664.5 871.5,659.5L871.5,602.5"/>
<path d="M616.5,494V491.5H628.5V494 M616.5,501V504.5H628.5V501 M619.5,503L622.5,499"/>
</g>
<g fill="#000">
<path d="M302,316H304L312,319.5L304,324H302Z"/>
<path d="M1120,536H1122L1130,539.5L1122,544H1120Z"/>
<path d="M1120,557H1122L1130,560.5L1122,565H1120Z"/>
<path d="M460,399H462L470,402.5L462,407H460Z"/>
<path d="M622,478H624L632,481.5L624,486H622Z"/>
<path d="M622,494H624L632,497.5L624,502H622Z"/>
<path d="M771,561H773L781,564.5L773,569H771Z"/>
<path d="M366,358V356L369.5,346L373,356V358Z"/>
<path d="M499,441V439L502.5,429L506,439V441Z"/>
<path d="M532,441V439L535.5,429L539,439V441Z"/>
<path d="M669,520V518L672.5,508L676,518V520Z"/>
<path d="M690,520V518L693.5,508L697,518V520Z"/>
<path d="M839,603V601L842.5,591L846,601V603Z"/>
<path d="M868,603V601L871.5,591L875,601V603Z"/>
</g>
<!-- boxes -->
<g shape-rendering="crispEdges" fill="none" stroke="#000" stroke-width="2">
<rect x="311" y="290" width="124" height="57"/>
<rect x="469" y="373" width="123" height="57"/>
<rect x="631" y="452" width="123" height="57"/>
<rect x="780" y="535" width="124" height="57"/>
<path d="M312,299L321,290"/>
</g>
<g fill="#000">
<text x="336" y="315">Выбор покупки</text>
<text x="316" y="343">0р.</text><text x="430" y="343" text-anchor="end">1</text>
<text x="481.3" y="398" textLength="101" lengthAdjust="spacingAndGlyphs">Оформление заказа</text>
<text x="474" y="427">0р.</text><text x="589" y="427" text-anchor="end">2</text>
<text x="643" y="477">Оформление товара</text>
<text x="636" y="505">0р.</text><text x="751" y="505" text-anchor="end">3</text>
<text x="802" y="560" textLength="89.5" lengthAdjust="spacingAndGlyphs">Доставка товара</text>
<text x="785" y="588">0р.</text><text x="900" y="588" text-anchor="end">4</text>
<text x="236" y="316">Начало покупки</text>
<text x="467" y="358">ОК</text>
<text x="617" y="444">ОК</text>
<text x="774" y="519">ОК</text>
<text x="1027" y="529">Отказ&#160; от покупки</text>
<text x="1021" y="578">Покупка совершена</text>
<text x="627" y="598">Товар не принят</text>
<text x="384" y="710">Пользователь</text>
<text x="680" y="703">Сотрудники</text>
</g>
</svg>
</body></html>
